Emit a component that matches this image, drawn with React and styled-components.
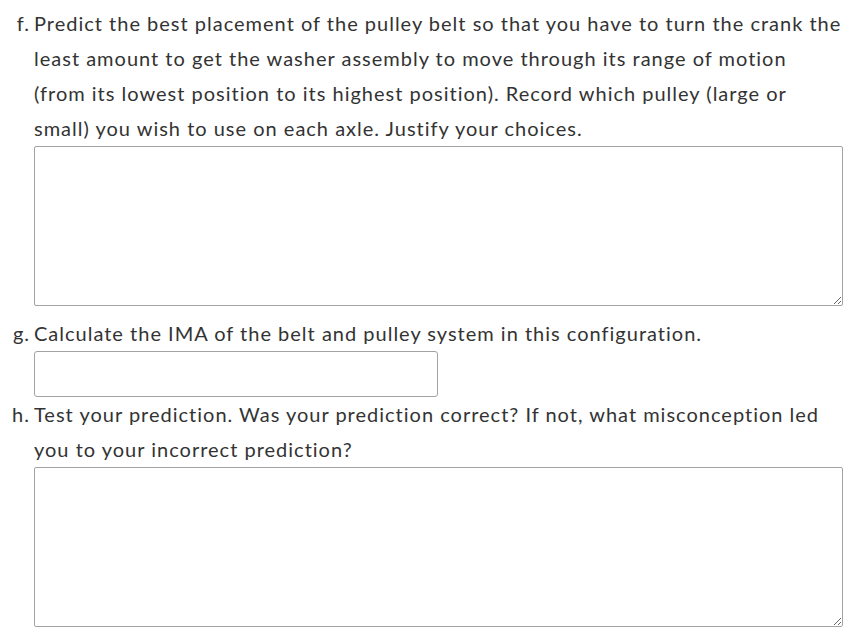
import styled, { createGlobalStyle } from 'styled-components'

const Global = createGlobalStyle`
  body {
    margin: 0;
    background: #fff;
    font-family: Lato, "Helvetica Neue", Arial, sans-serif;
    color: #333;
  }
`;

const Page = styled.div`
  padding: 6px 13px 0 0;
  width: 856px;
  box-sizing: border-box;
`;

const Item = styled.div`
  display: grid;
  grid-template-columns: 30px 1fr;
  column-gap: 4px;
  margin-bottom: ${props => props.gap || 0}px;
`;

const Marker = styled.div`
  text-align: right;
  font-size: 20px;
  line-height: 35px;
  letter-spacing: 1px;
`;

const Question = styled.div`
  font-size: 20px;
  line-height: 35px;
  letter-spacing: 1px;
`;

const Answer = styled.textarea`
  display: block;
  box-sizing: border-box;
  width: 809px;
  height: 160px;
  margin: 0;
  border: 1px solid #a3a3a3;
  border-radius: 2px;
  resize: vertical;
  font: inherit;
`;

const Short = styled.input`
  display: block;
  box-sizing: border-box;
  width: 404px;
  height: 46px;
  margin: 0;
  border: 1px solid #a3a3a3;
  border-radius: 3px;
  font: inherit;
`;

export default function App() {
  return (
    <Page>
      <Global />
      <Item gap={10}>
        <Marker>f.</Marker>
        <div>
          <Question>
            Predict the best placement of the pulley belt so that you have to turn the crank the
            least amount to get the washer assembly to move through its range of motion
            (from its lowest position to its highest position). Record which pulley (large or
            small) you wish to use on each axle. Justify your choices.
          </Question>
          <Answer />
        </div>
      </Item>
      <Item>
        <Marker>g.</Marker>
        <div>
          <Question>Calculate the IMA of the belt and pulley system in this configuration.</Question>
          <Short type="text" />
        </div>
      </Item>
      <Item>
        <Marker>h.</Marker>
        <div>
          <Question>
            Test your prediction. Was your prediction correct? If not, what misconception led
            you to your incorrect prediction?
          </Question>
          <Answer />
        </div>
      </Item>
    </Page>
  );
}
